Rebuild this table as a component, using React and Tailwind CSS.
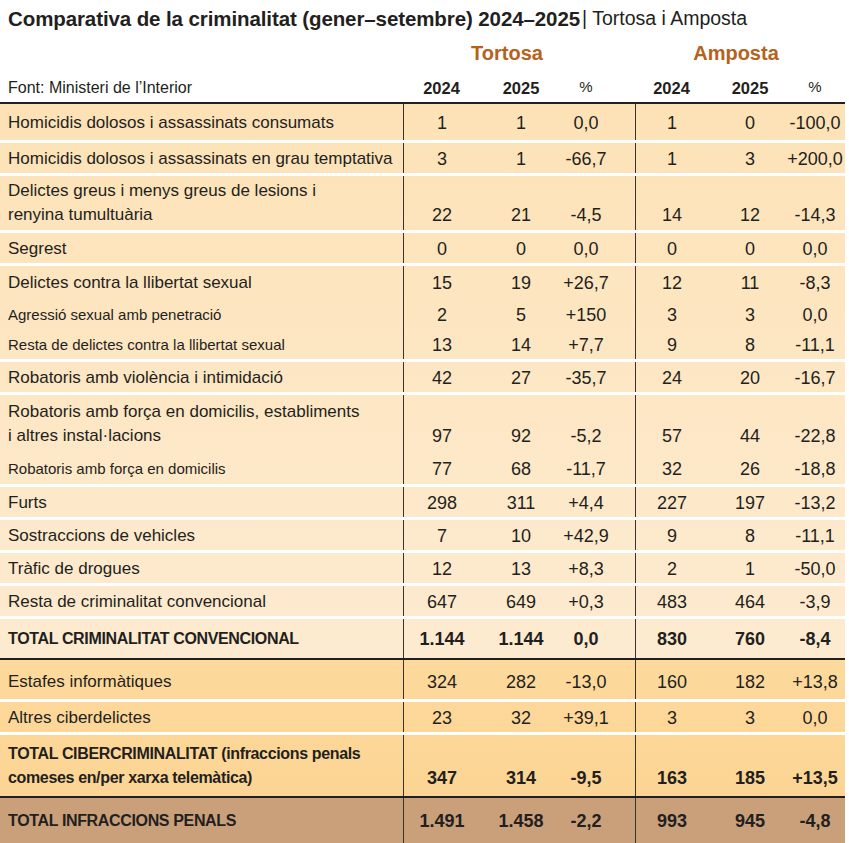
import React from "react";

const F = "font-['Liberation_Sans',Arial,sans-serif]";

const SEP_W = "border-b-[3px] border-white";
const SEP_K = "border-b-2 border-[#231f20]";

const sec1 = [
  { l: ["Homicidis dolosos i assassinats consumats"], t: ["1", "1", "0,0"], a: ["1", "0", "-100,0"], h: "h-[39px]", s: SEP_W },
  { l: ["Homicidis dolosos i assassinats en grau temptativa"], t: ["3", "1", "-66,7"], a: ["1", "3", "+200,0"], h: "h-[33px]", s: SEP_W },
  { l: ["Delictes greus i menys greus de lesions i", "renyina tumultuària"], t: ["22", "21", "-4,5"], a: ["14", "12", "-14,3"], h: "h-[57px]", s: SEP_W },
  { l: ["Segrest"], t: ["0", "0", "0,0"], a: ["0", "0", "0,0"], h: "h-[33px]", s: SEP_W },
  { l: ["Delictes contra la llibertat sexual"], t: ["15", "19", "+26,7"], a: ["12", "11", "-8,3"], h: "h-[33px]", s: "" },
  { l: ["Agressió sexual amb penetració"], small: true, t: ["2", "5", "+150"], a: ["3", "3", "0,0"], h: "h-[31px]", s: "" },
  { l: ["Resta de delictes contra la llibertat sexual"], small: true, t: ["13", "14", "+7,7"], a: ["9", "8", "-11,1"], h: "h-[32px]", s: SEP_W },
  { l: ["Robatoris amb violència i intimidació"], t: ["42", "27", "-35,7"], a: ["24", "20", "-16,7"], h: "h-[33px]", s: SEP_W },
  { l: ["Robatoris amb força en domicilis, establiments", "i altres instal·lacions"], t: ["97", "92", "-5,2"], a: ["57", "44", "-22,8"], h: "h-[58px]", s: "" },
  { l: ["Robatoris amb força en domicilis"], small: true, t: ["77", "68", "-11,7"], a: ["32", "26", "-18,8"], h: "h-[34px]", s: SEP_W },
  { l: ["Furts"], t: ["298", "311", "+4,4"], a: ["227", "197", "-13,2"], h: "h-[33px]", s: SEP_W },
  { l: ["Sostraccions de vehicles"], t: ["7", "10", "+42,9"], a: ["9", "8", "-11,1"], h: "h-[33px]", s: SEP_W },
  { l: ["Tràfic de drogues"], t: ["12", "13", "+8,3"], a: ["2", "1", "-50,0"], h: "h-[33px]", s: SEP_W },
  { l: ["Resta de criminalitat convencional"], t: ["647", "649", "+0,3"], a: ["483", "464", "-3,9"], h: "h-[33px]", s: SEP_W },
  { l: ["TOTAL CRIMINALITAT CONVENCIONAL"], bold: true, t: ["1.144", "1.144", "0,0"], a: ["830", "760", "-8,4"], h: "h-[41px]", s: SEP_K },
];

const sec2 = [
  { l: ["Estafes informàtiques"], t: ["324", "282", "-13,0"], a: ["160", "182", "+13,8"], h: "h-[42px]", s: SEP_W, down: true },
  { l: ["Altres ciberdelictes"], t: ["23", "32", "+39,1"], a: ["3", "3", "0,0"], h: "h-[33px]", s: SEP_W },
  { l: ["TOTAL CIBERCRIMINALITAT (infraccions penals", "comeses en/per xarxa telemàtica)"], bold: true, t: ["347", "314", "-9,5"], a: ["163", "185", "+13,5"], h: "h-[63px]", s: SEP_K },
];

const sec3 = [
  { l: ["TOTAL INFRACCIONS PENALS"], bold: true, t: ["1.491", "1.458", "-2,2"], a: ["993", "945", "-4,8"], h: "h-[45px]", s: "" },
];

function Cells({ vals, cols, bold, multi, down }) {
  return (
    <div
      className={`grid ${cols} h-full items-center border-l border-[#3a3330] ${
        multi ? "pt-[24px]" : down ? "pt-[5px]" : "pt-px"
      }`}
    >
      {vals.map((v, i) => (
        <div
          key={i}
          className={`flex justify-center whitespace-nowrap leading-[24px] text-[18px] ${bold ? "font-bold" : "font-normal"}`}
        >
          {v}
        </div>
      ))}
      <div />
    </div>
  );
}

function Row({ r }) {
  const multi = r.l.length > 1;
  const labelCls = r.bold
    ? "font-bold text-[16px] tracking-[-0.35px]"
    : r.small
    ? "text-[15px]"
    : "text-[17px]";
  return (
    <div className={`flex ${r.h} ${r.s}`}>
      <div
        className={`w-[403px] pl-2 flex flex-col justify-center ${r.down ? "pt-[5px]" : multi ? "" : "pt-px"} ${labelCls}`}
      >
        {r.l.map((line, i) => (
          <div key={i} className="leading-[24px] whitespace-nowrap">
            {line}
          </div>
        ))}
      </div>
      <div className="w-[232px]">
        <Cells vals={r.t} cols="grid-cols-[76px_82px_48px_1fr]" bold={r.bold} multi={multi} down={r.down} />
      </div>
      <div className="w-[210px]">
        <Cells vals={r.a} cols="grid-cols-[72px_84px_46px_1fr]" bold={r.bold} multi={multi} down={r.down} />
      </div>
    </div>
  );
}

export default function App() {
  return (
    <div className={`${F} w-[849px] h-[843px] bg-white text-[#231f20] overflow-hidden`}>
      <div className="w-[845px]">
        {/* Title */}
        <div className="h-[36px] flex items-center pl-2 pt-[2px] whitespace-nowrap">
          <span className="font-bold text-[20.5px] tracking-[-0.1px]">
            Comparativa de la criminalitat (gener–setembre) 2024–2025
          </span>
          <span className="text-[19.5px] ml-[2px]">| Tortosa i Amposta</span>
        </div>
        {/* Group names */}
        <div className="h-[34px] flex items-center">
          <div className="w-[403px]" />
          <div className="w-[232px] grid grid-cols-[208px_1fr]">
            <div className="text-center font-bold text-[20px] text-[#b5621d]">Tortosa</div>
          </div>
          <div className="w-[210px] grid grid-cols-[202px_1fr]">
            <div className="text-center font-bold text-[20px] text-[#b5621d]">Amposta</div>
          </div>
        </div>
        {/* Column headers */}
        <div className="h-[34px] flex items-center pt-[4px] border-b-2 border-[#231f20]">
          <div className="w-[403px] pl-2 text-[16px]">Font: Ministeri de l’Interior</div>
          <div className="w-[232px] grid grid-cols-[77px_82px_48px_1fr] text-[16.5px]">
            <div className="text-center font-bold">2024</div>
            <div className="text-center font-bold">2025</div>
            <div className="text-center text-[15px]">%</div>
          </div>
          <div className="w-[210px] grid grid-cols-[73px_84px_46px_1fr] text-[16.5px]">
            <div className="text-center font-bold">2024</div>
            <div className="text-center font-bold">2025</div>
            <div className="text-center text-[15px]">%</div>
          </div>
        </div>
        {/* Section 1 */}
        <div className="bg-linear-to-b from-[#fde2b6] to-[#fdebd1]">
          {sec1.map((r, i) => (
            <Row key={i} r={r} />
          ))}
        </div>
        {/* Section 2 */}
        <div className="bg-linear-to-b from-[#fdd99c] to-[#fcd594]">
          {sec2.map((r, i) => (
            <Row key={i} r={r} />
          ))}
        </div>
        {/* Section 3 */}
        <div className="bg-[#c9a07a]">
          {sec3.map((r, i) => (
            <Row key={i} r={r} />
          ))}
        </div>
      </div>
    </div>
  );
}
